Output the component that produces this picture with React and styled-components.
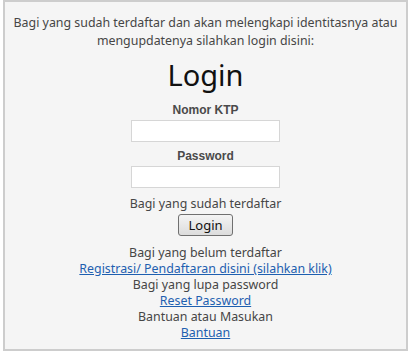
import React from "react";
import styled, { createGlobalStyle } from "styled-components";

const GlobalStyle = createGlobalStyle`
body {
  margin: 0;
  background: #fff;
  font-family: "Noto Sans", "Open Sans", sans-serif;
}
`

const Box = styled.div`
width: 401px;
margin: 0 0 0 3px;
padding: 12px 0 8px;
border: 2px solid #cdcdcd;
background: #f5f5f5;
color: #464646;
font-size: 12.4px;
line-height: 16px;
text-align: center;
`
const Intro = styled.p`
margin: 0 3px;
line-height: 18px;
`
const Title = styled.h1`
margin: 8px 0 10px;
font-size: 29px;
line-height: 34px;
font-weight: normal;
color: #111;
`
const Form = styled.form`
display: flex;
flex-direction: column;
align-items: center;
`
const Label = styled.label`
font-family: "Liberation Sans", Arial, sans-serif;
font-weight: bold;
font-size: 12px;
line-height: 16px;
color: #4a4a4a;
margin-top: ${p => p.first ? "0" : "6px"};
`
const Input = styled.input`
box-sizing: border-box;
width: 149px;
height: 22px;
margin-top: 2px;
border: 1px solid #d6d6d6;
background: #fff;
`
const Note = styled.div`
margin-top: 8px;
`
const Button = styled.button`
box-sizing: border-box;
margin-top: 2px;
width: 55px;
height: 22px;
padding: 0;
font-family: "Noto Sans", sans-serif;
font-size: 13px;
color: #111;
border: 1px solid #707070;
border-radius: 3px;
background: linear-gradient(#f4f4f4, #dcdcdc);
`
const Links = styled.div`
margin-top: 9px;
display: flex;
flex-direction: column;
`
const Link = styled.a`
color: #1e5fb0;
text-decoration: underline;
align-self: center;
`

export default function App() {
  return (
    <>
      <GlobalStyle />
      <Box>
        <Intro>
          Bagi yang sudah terdaftar dan akan melengkapi identitasnya atau mengupdatenya silahkan login disini:
        </Intro>
        <Title>Login</Title>
        <Form onSubmit={e => e.preventDefault()}>
          <Label first>Nomor KTP</Label>
          <Input type="text" />
          <Label>Password</Label>
          <Input type="password" />
          <Note>Bagi yang sudah terdaftar</Note>
          <Button type="submit">Login</Button>
        </Form>
        <Links>
          <span>Bagi yang belum terdaftar</span>
          <Link href="#">Registrasi/ Pendaftaran disini (silahkan klik)</Link>
          <span>Bagi yang lupa password</span>
          <Link href="#">Reset Password</Link>
          <span>Bantuan atau Masukan</span>
          <Link href="#">Bantuan</Link>
        </Links>
      </Box>
    </>
  )
}
